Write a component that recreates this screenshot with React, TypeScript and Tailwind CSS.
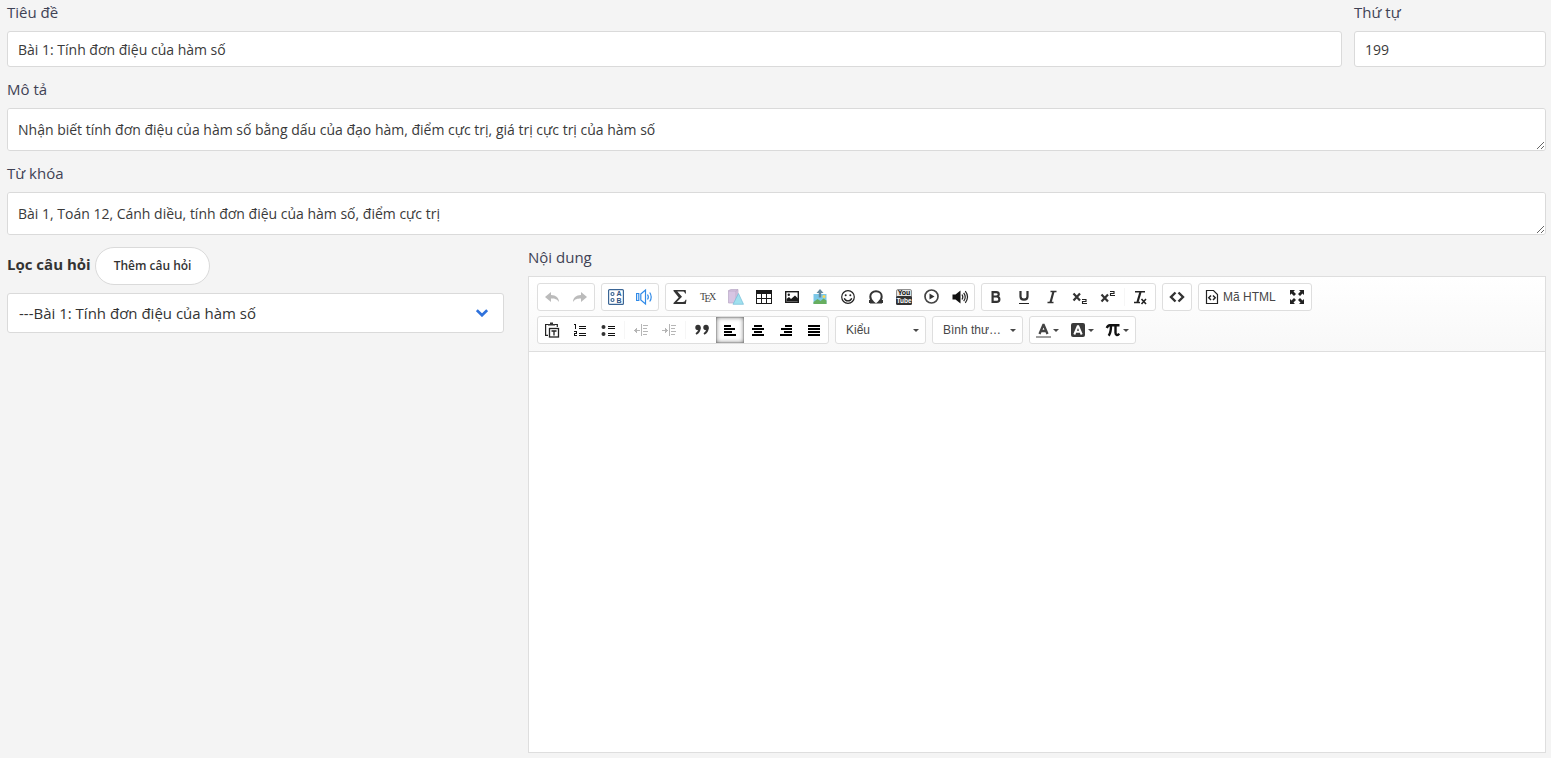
import type { ReactNode } from "react";

const fieldClass =
  "block w-full rounded-[3px] border border-[#dadada] bg-white px-[10px] font-['Open_Sans',sans-serif] text-sm text-[#3a3a3a] outline-none focus:border-blue-400";

function Field({
  id,
  label,
  className = "",
  children,
}: {
  id: string;
  label: string;
  className?: string;
  children: ReactNode;
}) {
  return (
    <div className={className}>
      <label htmlFor={id} className="mb-[7px] block text-[15px] leading-6">
        {label}
      </label>
      {children}
    </div>
  );
}

function Icon({ children, crisp = false }: { children: ReactNode; crisp?: boolean }) {
  return (
    <svg
      className="h-4 w-4 shrink-0 overflow-visible"
      viewBox="0 0 16 16"
      fill="none"
      shapeRendering={crisp ? "crispEdges" : "auto"}
      aria-hidden="true"
    >
      {children}
    </svg>
  );
}

function Group({ children }: { children: ReactNode }) {
  return (
    <div className="flex h-7 items-stretch rounded-[3px] border border-[#dedede] bg-white text-[#1a1a1a]">
      {children}
    </div>
  );
}

function Tool({
  title,
  active = false,
  disabled = false,
  children,
}: {
  title: string;
  active?: boolean;
  disabled?: boolean;
  children: ReactNode;
}) {
  return (
    <button
      type="button"
      aria-label={title}
      aria-pressed={active}
      disabled={disabled}
      className={
        "flex w-7 items-center justify-center " +
        (active ? "bg-white shadow-[0_0_5px_rgba(0,0,0,0.6)_inset,0_0_0_1px_rgba(0,0,0,0.12)_inset] " : "hover:bg-gray-100 ") +
        (disabled ? "opacity-30" : "")
      }
    >
      {children}
    </button>
  );
}

function Separator() {
  return <span className="mx-[2px] my-1 w-px bg-[#f6f6f6]" />;
}

function Caret() {
  return (
    <svg className="h-[3px] w-[6px] shrink-0" viewBox="0 0 6 3" aria-hidden="true">
      <path d="M0 0h6L3 3z" fill="#474747" />
    </svg>
  );
}

function Combo({ label, options }: { label: string; options: string[] }) {
  return (
    <div className="relative h-7 w-[91px] rounded-[3px] border border-[#dedede] bg-white">
      <select
        aria-label={label}
        className="h-full w-full appearance-none bg-transparent pr-4 pl-[10px] text-xs text-[#474747] outline-none"
      >
        {options.map((o) => (
          <option key={o}>{o}</option>
        ))}
      </select>
      <span className="pointer-events-none absolute top-3 right-[6px] flex">
        <Caret />
      </span>
    </div>
  );
}

function MenuTool({ title, children }: { title: string; children: ReactNode }) {
  return (
    <button
      type="button"
      aria-label={title}
      className="flex w-[35px] items-center justify-center gap-[1px] hover:bg-gray-100"
    >
      {children}
      <Caret />
    </button>
  );
}

const undoPath = "M1 8l6-5v3c5 0 8 3 8 7-2-3-4-3.500-8-3.500v3.500z";

function HistoryGroup() {
  return (
    <Group>
      <Tool title="Hoàn tác" disabled>
        <Icon>
          <path d={undoPath} fill="#222" />
        </Icon>
      </Tool>
      <Tool title="Làm lại" disabled>
        <Icon>
          <path d={undoPath} fill="#222" transform="translate(16 0) scale(-1 1)" />
        </Icon>
      </Tool>
    </Group>
  );
}

function QuizGroup() {
  return (
    <Group>
      <Tool title="Trắc nghiệm">
        <Icon>
          <rect x=".6" y=".6" width="14.800" height="14.800" rx="1" stroke="#3a6595" strokeWidth="1.200" />
          <circle cx="4.500" cy="5" r="1.500" stroke="#3a6595" strokeWidth="1.200" />
          <circle cx="4.500" cy="11" r="1.500" stroke="#3a6595" strokeWidth="1.200" />
          <g fill="#2c5384" fontFamily="Liberation Sans, sans-serif" fontSize="7" fontWeight="700">
            <text x="8.500" y="7.400">A</text>
            <text x="8.500" y="13.600">B</text>
          </g>
        </Icon>
      </Tool>
      <Tool title="Đọc văn bản">
        <Icon>
          <g stroke="#2f8ae8" strokeWidth="1.200">
            <path d="M.6 4.500h2.200v7H.6zM4.800 5l4.700-4v14l-4.700-4z" />
            <path d="M11.500 5.500c1 1.500 1 3.500 0 5M13.700 3.500c2 2.500 2 6.500 0 9" />
          </g>
        </Icon>
      </Tool>
    </Group>
  );
}

function InsertGroup() {
  return (
    <Group>
      <Tool title="Công thức">
        <Icon>
          <path d="M1.500 1h12.200l.3 3.500h-1c-.4-1.600-1-2-2.500-2H5.300L10 7.700 4.800 13h6c1.700 0 2.200-.6 2.700-2.200h1L13.800 15H1.500v-1l5.200-5.500L1.500 2z" fill="#333" />
        </Icon>
      </Tool>
      <Tool title="TeX">
        <Icon>
          <g fill="#444" fontFamily="Liberation Serif, serif" fontSize="10">
            <text x="0" y="11">T</text>
            <text x="4.500" y="13">E</text>
            <text x="9" y="11">X</text>
          </g>
        </Icon>
      </Tool>
      <Tool title="Hình học">
        <Icon>
          <path d="M.5 1.500L3 .5h7v11.500l-2 2H.5z" fill="#d7c5e3" stroke="#b7a7c4" strokeWidth=".7" />
          <path d="M.5 2H8v12M8 2l2-1.500" stroke="#b7a7c4" strokeWidth=".7" />
          <path d="M10.500 4.500L5 15.300h10.500z" fill="#9fe0ee" stroke="#75bdd8" strokeWidth=".7" />
        </Icon>
      </Tool>
      <Tool title="Bảng">
        <Icon crisp>
          <path d="M0 1h16v14H0z" fill="#1a1a1a" />
          <path d="M1 5h4v4H1zM6 5h4v4H6zM11 5h4v4h-4zM1 10h4v4H1zM6 10h4v4H6zM11 10h4v4h-4z" fill="#fff" />
        </Icon>
      </Tool>
      <Tool title="Hình ảnh">
        <Icon>
          <rect x="1.700" y="2.700" width="12.600" height="10.600" stroke="#1a1a1a" strokeWidth="1.400" />
          <circle cx="4.800" cy="5.800" r="1.200" fill="#1a1a1a" />
          <path d="M2.500 12.500V10L5 8l2 2 4-3.500 3 3v3z" fill="#1a1a1a" />
        </Icon>
      </Tool>
      <Tool title="Tải ảnh lên">
        <Icon>
          <path d="M1.500 5h13v10h-13z" fill="#7cc8e8" />
          <path d="M1.500 13l4-3 3 2 3-2.500 3 2V15h-13z" fill="#67ae60" />
          <circle cx="12" cy="7.500" r="1.500" fill="#f5d65b" />
          <path d="M8 0l3.500 4H9.200v4.500H6.800V4H4.500z" fill="#64879b" />
        </Icon>
      </Tool>
      <Tool title="Biểu tượng cảm xúc">
        <Icon>
          <circle cx="8" cy="8" r="6.300" stroke="#222" strokeWidth="1.200" />
          <circle cx="5.700" cy="6.200" r="1" fill="#222" />
          <circle cx="10.300" cy="6.200" r="1" fill="#222" />
          <path d="M4.300 9.300c1 3.500 6.400 3.500 7.400 0" stroke="#222" strokeWidth="1.300" />
        </Icon>
      </Tool>
      <Tool title="Ký tự đặc biệt">
        <Icon>
          <path d="M2 13.500h3.500C3 11.500 2.300 9.500 2.300 7.500 2.300 4.300 4.700 2.300 8 2.300s5.700 2 5.700 5.200c0 2-.7 4-3.200 6H14M2 11v3M14 11v3" stroke="#333" strokeWidth="2" />
        </Icon>
      </Tool>
      <Tool title="YouTube">
        <Icon>
          <rect x=".5" y=".5" width="15" height="15" rx="1.500" fill="#e4e4e4" stroke="#777" strokeWidth=".8" />
          <rect y="7" width="16" height="9" rx="1.500" fill="#333" />
          <g fontFamily="Liberation Sans, sans-serif" fontSize="7" fontWeight="700" textAnchor="middle">
            <text x="8" y="6.300" fill="#111">You</text>
            <text x="8" y="14" fill="#fff" fontSize="6.500">Tube</text>
          </g>
        </Icon>
      </Tool>
      <Tool title="Video">
        <Icon>
          <circle cx="7.500" cy="7.500" r="6.500" stroke="#444" strokeWidth="1.700" />
          <path d="M5.500 4.500l5 3-5 3z" fill="#333" />
        </Icon>
      </Tool>
      <Tool title="Âm thanh">
        <Icon>
          <path d="M.5 5.500h3l5-4v13l-5-4h-3z" fill="#111" />
          <path d="M10 5.500c1 1.500 1 3.500 0 5M11.700 3.800c1.800 2.500 1.800 6 0 8.400M13.300 2.200c2.700 3.500 2.700 8 0 11.600" stroke="#222" strokeWidth="1.200" />
        </Icon>
      </Tool>
    </Group>
  );
}

function StyleGroup() {
  return (
    <Group>
      <Tool title="Đậm">
        <Icon>
          <path
            d="M4.600 3.100h3.600c3.400 0 3.400 4.400 0 4.400H4.600zM4.600 7.500h4c3.700 0 3.700 5.400 0 5.400h-4z"
            stroke="#333"
            strokeWidth="2.200"
          />
        </Icon>
      </Tool>
      <Tool title="Gạch chân">
        <Icon>
          <path d="M4.500 2v5.500c0 4.200 7 4.200 7 0V2" stroke="#333" strokeWidth="2.200" />
          <path d="M3 14.500h10" stroke="#222" />
        </Icon>
      </Tool>
      <Tool title="Nghiêng">
        <Icon>
          <path d="M6.500 2.600h6M3.500 13.400h6" stroke="#333" strokeWidth="1.500" />
          <path d="M9.500 2.500L6.500 13.500" stroke="#333" strokeWidth="2.200" />
        </Icon>
      </Tool>
      <Tool title="Chỉ số dưới">
        <Icon>
          <path d="M1.500 4.500l6.500 7M8 4.500l-6.500 7" stroke="#333" strokeWidth="2.200" />
          <path d="M10 10.500h4v2h-3.500v2H15" stroke="#222" strokeWidth="1.100" />
        </Icon>
      </Tool>
      <Tool title="Chỉ số trên">
        <Icon>
          <path d="M1.500 5.500l6.500 7M8 5.500l-6.500 7" stroke="#333" strokeWidth="2.200" />
          <path d="M10 2.500h4v2h-3.500v2H15" stroke="#222" strokeWidth="1.100" />
        </Icon>
      </Tool>
      <Separator />
      <Tool title="Xóa định dạng">
        <Icon>
          <path d="M2 2.700h10M1 13.400h6" stroke="#222" strokeWidth="1.500" />
          <path d="M7.500 3l-3 10" stroke="#222" strokeWidth="2.200" />
          <path d="M8.500 10l4.500 5M13 10l-4.500 5" stroke="#222" strokeWidth="1.600" />
        </Icon>
      </Tool>
    </Group>
  );
}

function SourceGroup() {
  return (
    <Group>
      <button type="button" className="flex w-[84px] items-center gap-[3px] pl-[5px] text-xs text-[#474747] hover:bg-gray-100">
        <Icon>
          <path d="M2.500 1.500h7l4 4v9h-11z" stroke="#222" strokeWidth="1.200" />
          <path d="M7 6.500L4.800 8.800 7 11M9 6.500l2.200 2.300L9 11" stroke="#222" strokeWidth="1.500" />
        </Icon>
        <span className="whitespace-nowrap">Mã HTML</span>
      </button>
      <Tool title="Phóng to tối đa">
        <Icon>
          <path d="M1 1h5L4.500 2.500 7 5 5 7 2.500 4.500 1 6zM15 1v5l-1.500-1.500L11 7 9 5l2.500-2.500L10 1zM1 15v-5l1.500 1.500L5 9l2 2-2.500 2.500L6 15zM15 15h-5l1.500-1.500L9 11l2-2 2.500 2.500L15 10z" fill="#222" />
        </Icon>
      </Tool>
    </Group>
  );
}

function ParagraphGroup() {
  return (
    <Group>
      <Tool title="Dán văn bản">
        <Icon>
          <path d="M4 2.500H1.600v10.800H4M11 2.500h2.300V5" stroke="#222" strokeWidth="1.200" />
          <path d="M4 3.500V2h2V.5h3V2h2v1.500z" fill="#333" />
          <rect x="5.500" y="6.500" width="9" height="8.500" stroke="#222" strokeWidth="1.300" />
          <path d="M7.500 9h5M10 9v4.500" stroke="#222" strokeWidth="1.300" />
        </Icon>
      </Tool>
      <Tool title="Danh sách có thứ tự">
        <Icon crisp>
          <path d="M7 4h7v1H7zM7 6h7v1H7zM7 11h7v1H7zM7 13h7v1H7z" fill="#111" />
          <path d="M2 2h2v5H3V3H2zM2 9h3v3H3v1h2v1H2v-3h2v-1H2z" fill="#111" />
        </Icon>
      </Tool>
      <Tool title="Danh sách dấu đầu dòng">
        <Icon>
          <circle cx="3.500" cy="5" r="2" fill="#333" />
          <circle cx="3.500" cy="12" r="2" fill="#333" />
          <path d="M8 4h7v1H8zM8 6h7v1H8zM8 11h7v1H8zM8 13h7v1H8z" fill="#111" />
        </Icon>
      </Tool>
      <Separator />
      <Tool title="Giảm thụt lề" disabled>
        <Icon crisp>
          <path d="M8 2h1v12H8zM10 3h5v1h-5zM10 6h4v1h-4zM10 9h5v1h-5zM10 12h4v1h-4zM1 8h6v1H1zM2 7h1v3H2zM3 6h1v5H3z" fill="#111" />
        </Icon>
      </Tool>
      <Tool title="Tăng thụt lề" disabled>
        <Icon crisp>
          <path d="M8 2h1v12H8zM10 3h5v1h-5zM10 6h4v1h-4zM10 9h5v1h-5zM10 12h4v1h-4zM1 8h6v1H1zM5 7h1v3H5zM4 6h1v5H4z" fill="#111" />
        </Icon>
      </Tool>
      <Separator />
      <Tool title="Trích dẫn">
        <Icon>
          <circle cx="4" cy="5.500" r="2.700" fill="#333" />
          <circle cx="12" cy="5.500" r="2.700" fill="#333" />
          <path d="M5.700 5.500c0 3-1 5-3.700 6.500M13.700 5.500c0 3-1 5-3.700 6.500" stroke="#333" strokeWidth="2" />
        </Icon>
      </Tool>
      <Tool title="Căn trái" active>
        <Icon crisp>
          <path d="M2 3h7v2H2zM2 6h11v2H2zM2 9h8v2H2zM2 12h12v2H2z" fill="#000" />
        </Icon>
      </Tool>
      <Tool title="Căn giữa">
        <Icon crisp>
          <path d="M4 3h8v2H4zM2 6h12v2H2zM4 9h8v2H4zM2 12h12v2H2z" fill="#000" />
        </Icon>
      </Tool>
      <Tool title="Căn phải">
        <Icon crisp>
          <path d="M7 3h7v2H7zM3 6h11v2H3zM6 9h8v2H6zM2 12h12v2H2z" fill="#000" />
        </Icon>
      </Tool>
      <Tool title="Căn đều">
        <Icon crisp>
          <path d="M2 3h12v2H2zM2 6h12v2H2zM2 9h12v2H2zM2 12h12v2H2z" fill="#000" />
        </Icon>
      </Tool>
    </Group>
  );
}

function ColorGroup() {
  return (
    <Group>
      <MenuTool title="Màu chữ">
        <Icon>
          <path d="M3.500 12L7.300 3h.4l3.800 9M5 9h5" stroke="#444" strokeWidth="2.300" />
          <path d="M0 15h15" stroke="#888" strokeWidth="1.600" />
        </Icon>
      </MenuTool>
      <MenuTool title="Màu nền">
        <Icon>
          <rect x="0" y="1" width="14" height="14" rx="2" fill="#3a3a3a" />
          <path d="M3.300 12.500L6.700 4.200h.6l3.400 8.300M4.800 9.800h4.400" stroke="#fff" strokeWidth="2" />
        </Icon>
      </MenuTool>
      <MenuTool title="Toán học">
        <Icon>
          <path d="M.8 6c.8-2.300 1.500-2.800 3-2.800H13.500" stroke="#111" strokeWidth="2.400" />
          <path d="M5 3.500c0 4-.3 7.500-2.300 10.300M9.500 3.500v7.300c0 2.600 2.300 2.900 3.700.8" stroke="#111" strokeWidth="2.400" />
        </Icon>
      </MenuTool>
    </Group>
  );
}

function Editor() {
  return (
    <div className="border border-[#dedede] bg-white font-['Liberation_Sans',Arial,sans-serif]">
      <div className="flex flex-col gap-[5px] border-b border-[#dedede] bg-linear-to-b from-white to-[#f8f8f8] px-2 pt-[6px] pb-[7px]">
        <div className="flex flex-wrap gap-[6px]">
          <HistoryGroup />
          <QuizGroup />
          <InsertGroup />
          <StyleGroup />
          <Group>
            <Tool title="Đoạn mã">
              <Icon>
                <path d="M6.500 3.500L2 8l4.500 4.500M9.500 3.500L14 8l-4.500 4.500" stroke="#333" strokeWidth="2.400" />
              </Icon>
            </Tool>
          </Group>
          <SourceGroup />
        </div>
        <div className="flex flex-wrap gap-[6px]">
          <ParagraphGroup />
          <Combo label="Kiểu" options={["Kiểu"]} />
          <Combo label="Định dạng" options={["Bình thư…"]} />
          <ColorGroup />
        </div>
      </div>
      <textarea id="content" className="block h-[400px] w-full resize-none bg-white p-5 text-sm outline-none" />
    </div>
  );
}

export default function App() {
  return (
    <form className="flex min-h-screen flex-col gap-[10px] bg-[#f4f4f4] pr-[5px] pl-[7px] font-['Open_Sans',sans-serif] text-[#3f4254]">
      <div className="flex gap-3">
        <Field id="title" label="Tiêu đề" className="min-w-0 flex-1">
          <input id="title" className={fieldClass + " h-9"} defaultValue="Bài 1: Tính đơn điệu của hàm số" />
        </Field>
        <Field id="order" label="Thứ tự" className="w-48 shrink-0">
          <input id="order" className={fieldClass + " h-9"} defaultValue="199" />
        </Field>
      </div>

      <Field id="description" label="Mô tả">
        <textarea
          id="description"
          rows={1}
          className={fieldClass + " h-[43px] resize-y py-[11px] leading-5"}
          defaultValue="Nhận biết tính đơn điệu của hàm số bằng dấu của đạo hàm, điểm cực trị, giá trị cực trị của hàm số"
        />
      </Field>

      <Field id="keywords" label="Từ khóa">
        <textarea
          id="keywords"
          rows={1}
          className={fieldClass + " h-[43px] resize-y py-[11px] leading-5"}
          defaultValue="Bài 1, Toán 12, Cánh diều, tính đơn điệu của hàm số, điểm cực trị"
        />
      </Field>

      <div className="grid grid-cols-3 gap-6">
        <div className="pt-[2px]">
          <div className="mb-2 flex items-baseline gap-1">
            <label htmlFor="lesson" className="text-[15px] font-bold text-[#333]">
              Lọc câu hỏi
            </label>
            <button
              type="button"
              className="h-[38px] rounded-full border border-[#dadada] bg-white px-[18px] text-xs font-semibold text-[#333] hover:bg-gray-50"
            >
              Thêm câu hỏi
            </button>
          </div>
          <div className="relative">
            <select
              id="lesson"
              className="h-10 w-full appearance-none rounded-[3px] border border-[#dadada] bg-white pr-10 pl-[11px] text-[15px] text-[#333] outline-none"
            >
              <option>---Bài 1: Tính đơn điệu của hàm số</option>
            </select>
            <svg
              className="pointer-events-none absolute top-4 right-4 h-2 w-3"
              viewBox="0 0 12 8"
              fill="none"
              aria-hidden="true"
            >
              <path d="M.8 1.200L6 6.200l5.200-5" stroke="#2f72dc" strokeWidth="2.800" />
            </svg>
          </div>
        </div>
        <Field id="content" label="Nội dung" className="col-span-2">
          <Editor />
        </Field>
      </div>
    </form>
  );
}
